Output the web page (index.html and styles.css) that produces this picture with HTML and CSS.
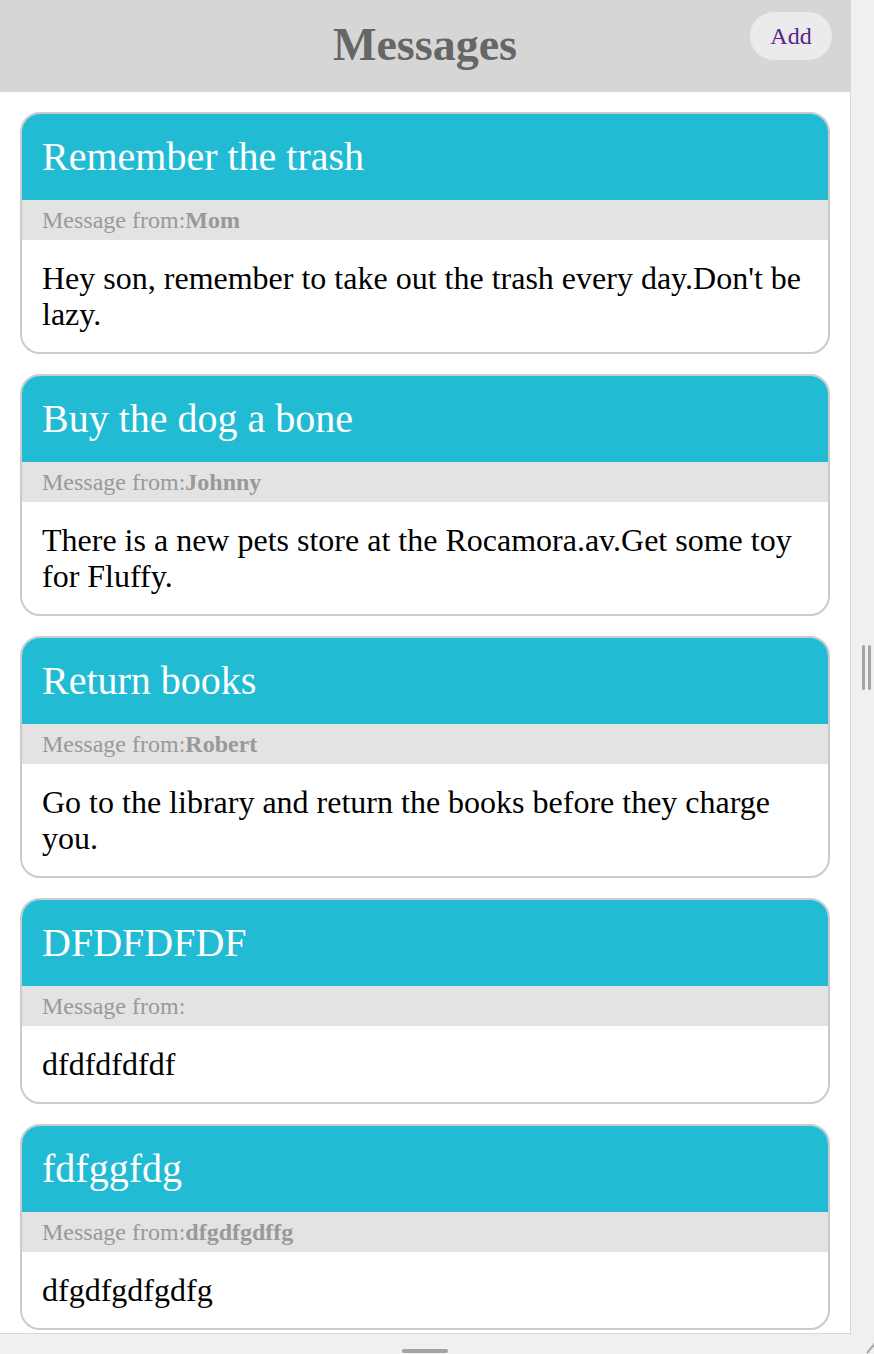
FILE: index.html
```html
<!DOCTYPE html>
<html>
<head>
<meta charset="utf-8">
<link rel="stylesheet" href="styles.css">
</head>
<body>
<div class="shell">
  <div class="frame">
    <header class="topbar">
      <h1 class="title">Messages</h1>
      <button class="add-btn">Add</button>
    </header>
    <main class="list">
      <section class="card">
        <h2 class="card-title">Remember the trash</h2>
        <div class="card-from">Message from:<b>Mom</b></div>
        <p class="card-body">Hey son, remember to take out the trash every day.Don't be lazy.</p>
      </section>
      <section class="card">
        <h2 class="card-title">Buy the dog a bone</h2>
        <div class="card-from">Message from:<b>Johnny</b></div>
        <p class="card-body">There is a new pets store at the Rocamora.av.Get some toy for Fluffy.</p>
      </section>
      <section class="card">
        <h2 class="card-title">Return books</h2>
        <div class="card-from">Message from:<b>Robert</b></div>
        <p class="card-body">Go to the library and return the books before they charge you.</p>
      </section>
      <section class="card">
        <h2 class="card-title">DFDFDFDF</h2>
        <div class="card-from">Message from:</div>
        <p class="card-body">dfdfdfdfdf</p>
      </section>
      <section class="card">
        <h2 class="card-title">fdfggfdg</h2>
        <div class="card-from">Message from:<b>dfgdfgdffg</b></div>
        <p class="card-body">dfgdfgdfgdfg</p>
      </section>
    </main>
  </div>
  <div class="handle-right"><span></span><span></span></div>
  <div class="handle-bottom"></div>
  <div class="handle-corner"></div>
</div>
</body>
</html>
```
FILE: styles.css
```css
html, body {
  margin: 0;
  padding: 0;
}
body {
  background: #f0f0f0;
  font-family: "Liberation Serif", "Times New Roman", serif;
  width: 874px;
  height: 1354px;
  overflow: hidden;
}
.shell {
  position: relative;
  width: 874px;
  height: 1354px;
}
.frame {
  width: 850px;
  height: 1333px;
  background: #fff;
  border-right: 1px solid #d9d9d9;
  border-bottom: 1px solid #d9d9d9;
  overflow: hidden;
}
.topbar {
  height: 92px;
  background: #d6d6d6;
  display: flex;
  align-items: center;
  justify-content: center;
  position: relative;
}
.title {
  margin: 0 0 4px;
  font-size: 46px;
  font-weight: bold;
  color: #666;
}
.add-btn {
  position: absolute;
  right: 18px;
  top: 12px;
  width: 82px;
  height: 48px;
  border: none;
  border-radius: 24px;
  background: #ebebeb;
  color: #55258d;
  font-family: "Liberation Serif", "Times New Roman", serif;
  font-size: 24px;
  padding: 0;
}
.list {
  padding: 20px;
  display: flex;
  flex-direction: column;
  gap: 20px;
}
.card {
  border: 2px solid #cbcbcb;
  border-radius: 20px;
  overflow: hidden;
}
.card-title {
  margin: 0;
  background: #21bbd4;
  color: #fff;
  font-weight: normal;
  font-size: 40px;
  padding: 20px 20px;
  line-height: 46px;
}
.card-from {
  background: #e3e3e3;
  color: #999;
  font-size: 24px;
  line-height: 28px;
  padding: 6px 20px;
}
.card-from b {
  font-weight: bold;
}
.card-body {
  margin: 0;
  font-size: 32px;
  line-height: 36px;
  padding: 20px 20px;
  color: #000;
}
.handle-right {
  position: absolute;
  left: 862px;
  top: 645px;
  display: flex;
  gap: 3px;
}
.handle-right span {
  width: 3px;
  height: 45px;
  background: #a3a3a3;
  border-radius: 2px;
}
.handle-bottom {
  position: absolute;
  left: 402px;
  top: 1349px;
  width: 46px;
  height: 4px;
  background: #a3a3a3;
  border-radius: 2px;
}
.handle-corner {
  position: absolute;
  left: 864px;
  top: 1346px;
  width: 16px;
  height: 2px;
  background: #a8a8a8;
  transform: rotate(-50deg);
}
```
